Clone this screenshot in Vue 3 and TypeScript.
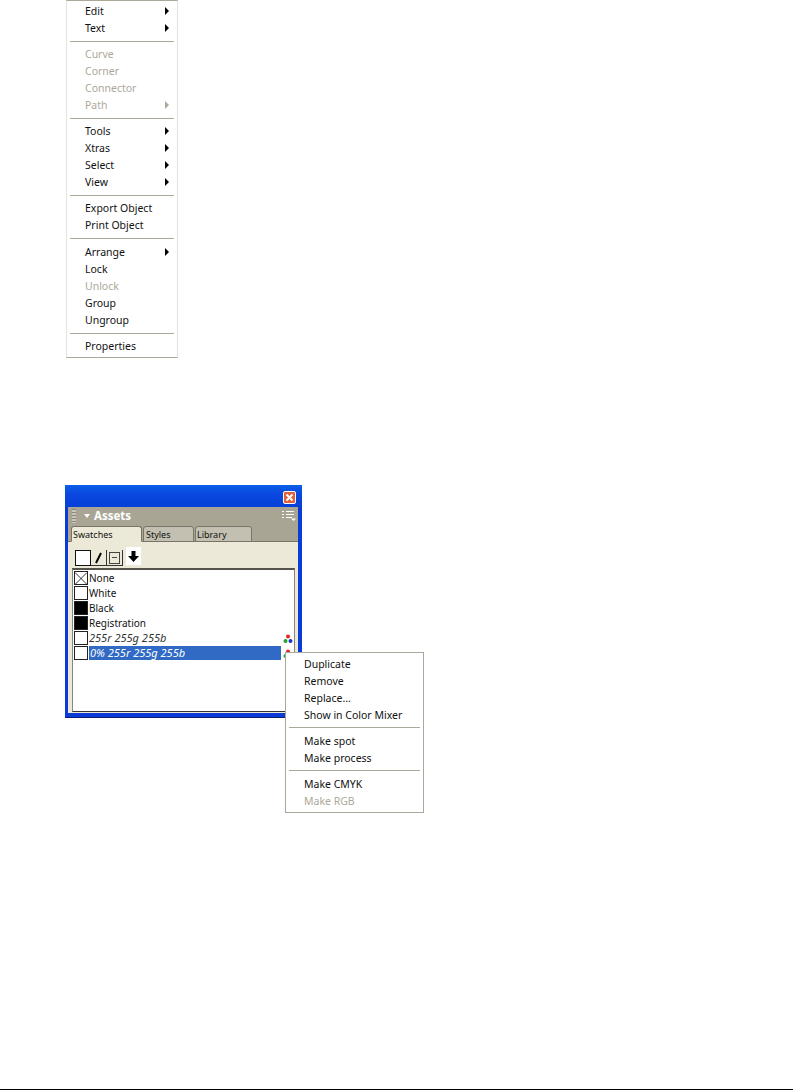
<script setup lang="ts">
interface MenuItem {
  label?: string
  disabled?: boolean
  arrow?: boolean
  sep?: boolean
  nudge?: boolean
}

const mainMenu: MenuItem[] = [
  { label: "Edit", arrow: true },
  { label: "Text", arrow: true },
  { sep: true },
  { label: "Curve", disabled: true },
  { label: "Corner", disabled: true },
  { label: "Connector", disabled: true },
  { label: "Path", disabled: true, arrow: true },
  { sep: true },
  { label: "Tools", arrow: true },
  { label: "Xtras", arrow: true },
  { label: "Select", arrow: true },
  { label: "View", arrow: true },
  { sep: true },
  { label: "Export Object" },
  { label: "Print Object" },
  { sep: true },
  { label: "Arrange", arrow: true, nudge: true },
  { label: "Lock" },
  { label: "Unlock", disabled: true },
  { label: "Group" },
  { label: "Ungroup" },
  { sep: true },
  { label: "Properties" },
]

const swatchMenu: MenuItem[] = [
  { label: "Duplicate" },
  { label: "Remove" },
  { label: "Replace..." },
  { label: "Show in Color Mixer" },
  { sep: true },
  { label: "Make spot" },
  { label: "Make process" },
  { sep: true },
  { label: "Make CMYK" },
  { label: "Make RGB", disabled: true },
]

const swatches = [
  { name: "None", chip: "none" },
  { name: "White", chip: "white" },
  { name: "Black", chip: "black" },
  { name: "Registration", chip: "black" },
  { name: "255r 255g 255b", chip: "white", custom: true },
  { name: "0% 255r 255g 255b", chip: "white", custom: true, selected: true },
]
</script>

<template>
  <div class="page">
    <ul class="menu main-menu">
      <template v-for="(item, i) in mainMenu" :key="i">
        <li v-if="item.sep" class="sep" />
        <li v-else class="item" :class="{ disabled: item.disabled, nudge: item.nudge }">
          <span>{{ item.label }}</span>
          <i v-if="item.arrow" class="arrow" />
        </li>
      </template>
    </ul>

    <div class="panel">
      <div class="titlebar">
        <div class="close">
          <svg width="11" height="11" viewBox="0 0 11 11">
            <path d="M2.500 2.500l6 6M8.500 2.500l-6 6" stroke="#fff" stroke-width="2" />
          </svg>
        </div>
      </div>
      <div class="panel-inner">
        <div class="panel-head">
          <div class="grip" />
          <i class="down" />
          <span class="panel-title">Assets</span>
          <svg class="options" width="14" height="12" viewBox="0 0 14 12">
            <path d="M0 1.500h2M4 1.500h8M0 4.500h2M4 4.500h8M0 7.500h2M4 7.500h6" stroke="#fff" fill="none" />
            <path d="M9 8.500h5l-2.500 2.500z" fill="#fff" />
          </svg>
        </div>
        <div class="tabs">
          <div class="tab active">Swatches</div>
          <div class="tab">Styles</div>
          <div class="tab wide">Library</div>
        </div>
        <div class="toolbar">
          <div class="tool first"><b class="fill-box" /></div>
          <div class="tool">
            <svg width="11" height="14" viewBox="0 0 11 14">
              <path d="M3 12L8 2" stroke="#000" stroke-width="2" />
            </svg>
          </div>
          <div class="tool"><b class="text-box" /></div>
          <div class="apply">
            <svg width="11" height="13" viewBox="0 0 11 13">
              <path d="M3.500 1h4v5H11l-5.500 6L0 6h3.500z" fill="#000" />
            </svg>
          </div>
        </div>
        <div class="list-wrap">
          <div class="list">
            <div v-for="s in swatches" :key="s.name" class="swatch">
              <span class="chip" :class="s.chip">
                <svg v-if="s.chip === 'none'" width="13" height="13" viewBox="0 0 13 13">
                  <path d="M0 0l13 13M13 0L0 13" stroke="#222" />
                </svg>
              </span>
              <span class="name" :class="{ custom: s.custom, selected: s.selected }">{{ s.name }}</span>
              <svg v-if="s.custom" class="dots" width="10" height="10" viewBox="0 0 10 10">
                <circle cx="5" cy="2.500" r="2" fill="#e3261c" />
                <circle cx="2.500" cy="7" r="2" fill="#1fa52b" />
                <circle cx="7.500" cy="7" r="2" fill="#2030c8" />
              </svg>
            </div>
          </div>
        </div>
      </div>

      <ul class="menu swatch-menu">
        <template v-for="(item, i) in swatchMenu" :key="i">
          <li v-if="item.sep" class="sep" />
          <li v-else class="item" :class="{ disabled: item.disabled }">
            <span>{{ item.label }}</span>
          </li>
        </template>
      </ul>
    </div>

    <div class="rule" />
  </div>
</template>

<style scoped>
* {
  box-sizing: border-box;
}

.page {
  width: 793px;
  height: 1090px;
  padding-left: 66px;
  display: flex;
  flex-direction: column;
  align-items: flex-start;
  font-family: "Noto Sans", "Open Sans", sans-serif;
  font-size: 10.500px;
  color: #111;
  background: #fff;
  overflow: hidden;
}

.menu {
  list-style: none;
  margin: 0;
  background: #fff;
}

.main-menu {
  width: 112px;
  height: 358px;
  padding: 2px 3px 0;
  border: 1px solid #e4e2da;
  border-top-color: #aca899;
  border-bottom-color: #aca899;
}

.item {
  height: 17px;
  display: flex;
  align-items: center;
  justify-content: space-between;
  padding: 0 5px 0 15px;
  white-space: nowrap;
}

.main-menu .item {
  padding-bottom: 2px;
}

/* collapses with the separator's 4px margin */
.main-menu .item.nudge {
  margin-top: 5px;
}

.item.disabled {
  color: #aca899;
}

.sep {
  height: 1px;
  margin: 4px 0 4px;
  background: #aca899;
}

.arrow {
  width: 0;
  height: 0;
  border-left: 4px solid #000;
  border-top: 4px solid transparent;
  border-bottom: 4px solid transparent;
}

.disabled .arrow {
  border-left-color: #aca899;
}

.panel {
  position: relative;
  width: 237px;
  height: 233px;
  margin-top: 127px;
  margin-left: -1px;
  padding: 0 4px 4px 3px;
  display: flex;
  flex-direction: column;
  background: #0a3bd6;
  border-bottom: 1px solid #0a1f7a;
  flex: none;
}

.titlebar {
  height: 22px;
  margin: 0 -4px 0 -3px;
  padding: 6px 6px 0 0;
  display: flex;
  justify-content: flex-end;
  background: linear-gradient(#0a5fe8, #0a48e0 40%, #0540d8);
  flex: none;
}

.close {
  width: 13px;
  height: 13px;
  border: 1px solid #fff;
  border-radius: 2px;
  background: #e0603a;
  display: flex;
  align-items: center;
  justify-content: center;
}

.close svg {
  flex: none;
}

.panel-inner {
  flex: 1;
  display: flex;
  flex-direction: column;
  background: #ece9d8;
  min-height: 0;
}

.panel-head {
  height: 19px;
  display: flex;
  align-items: center;
  padding: 0 2px 2px 4px;
  background: #a8a595;
  flex: none;
}

.grip {
  width: 4px;
  height: 14px;
  margin-right: 8px;
  background: repeating-linear-gradient(#8b8878 0 1px, #c8c6ba 1px 3px);
}

.down {
  width: 0;
  height: 0;
  margin-right: 4px;
  border-top: 4px solid #fff;
  border-left: 3.500px solid transparent;
  border-right: 3.500px solid transparent;
}

.panel-title {
  flex: 1;
  color: #fff;
  font-weight: 700;
  font-size: 11.500px;
}

.tabs {
  height: 16px;
  padding-left: 3px;
  display: flex;
  align-items: flex-end;
  background: #a8a595;
  border-bottom: 1px solid #77756a;
  font-size: 9px;
  flex: none;
}

.tab {
  width: 51px;
  height: 16px;
  margin-bottom: -1px;
  margin-left: 1px;
  padding: 1px 0 0 2px;
  background: #c3c0b1;
  border: 1px solid #77756a;
  border-radius: 3px 3px 0 0;
}

.tab.active {
  width: 71px;
  margin-left: 0;
  padding-left: 1px;
  background: #ece9d8;
  border-bottom-color: #ece9d8;
}

.tab.wide {
  width: 57px;
  padding-left: 1px;
}

.toolbar {
  height: 26px;
  padding: 2px 0 0 7px;
  display: flex;
  align-items: flex-start;
  flex: none;
}

.tool {
  width: 16px;
  height: 16px;
  margin-top: 6px;
  border-right: 1px solid #333;
  border-bottom: 1px solid #333;
  display: flex;
  align-items: center;
  justify-content: center;
}

.tool.first {
  border: 0;
}

.fill-box {
  width: 16px;
  height: 16px;
  background: #fff;
  border: 1px solid #111;
}

.text-box {
  width: 11px;
  height: 12px;
  border: 1px solid #444;
  background: linear-gradient(#444, #444) center / 5px 1px no-repeat;
}

.apply {
  width: 15px;
  height: 18px;
  margin-top: 3px;
  margin-left: 3px;
  background: #fff;
  display: flex;
  align-items: center;
  justify-content: center;
}

.list-wrap {
  flex: 1;
  padding: 0 3px 0 4px;
  min-height: 0;
}

.list {
  height: 144px;
  background: #fff;
  border: 1px solid #8a877a;
  border-top: 2px solid #55534a;
  border-bottom-color: #333;
  padding: 0 0 0 1px;
}

.swatch {
  height: 15px;
  display: flex;
  align-items: center;
  position: relative;
  font-size: 10px;
}

.chip {
  width: 14px;
  height: 14px;
  border: 1px solid #222;
  flex: none;
  display: flex;
}

.chip.black {
  background: #000;
}

.name {
  margin-left: 1px;
  height: 14px;
  line-height: 14px;
}

.name.custom {
  font-style: italic;
  font-size: 11px;
  color: #333;
}

.name.selected {
  width: 192px;
  color: #fff;
  background: #316ac5;
  padding-left: 1px;
}

.dots {
  position: absolute;
  right: 1px;
  top: 4px;
}

.swatch-menu {
  position: absolute;
  left: 220px;
  top: 167px;
  width: 139px;
  height: 161px;
  padding: 2px 3px 0;
  border: 1px solid #aca899;
}

.swatch-menu .item {
  padding: 0 0 0 15px;
}

.rule {
  margin: auto 0 0 -66px;
  width: 793px;
  height: 1px;
  background: #000;
  flex: none;
}
</style>
